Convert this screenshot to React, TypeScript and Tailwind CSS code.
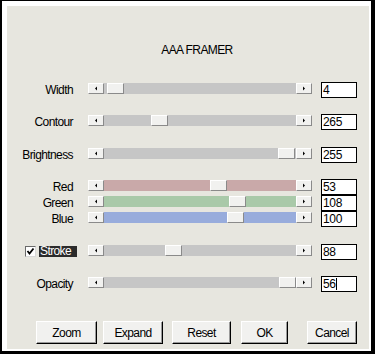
import React from 'react';

const sliders = [
  { label: 'Width', value: '4', thumb: 19, track: 'bg-[#c6c6c6]', gap: 'mt-[25px]' },
  { label: 'Contour', value: '265', thumb: 63, track: 'bg-[#c6c6c6]', gap: 'mt-[16px]' },
  { label: 'Brightness', value: '255', thumb: 190, track: 'bg-[#c6c6c6]', gap: 'mt-[17px]' },
  { label: 'Red', value: '53', thumb: 122, track: 'bg-[#c9a9a9]', gap: 'mt-[16px]' },
  { label: 'Green', value: '108', thumb: 141, track: 'bg-[#a9c9a9]', gap: 'mt-0' },
  { label: 'Blue', value: '100', thumb: 139, track: 'bg-[#98acdc]', gap: 'mt-0' },
];

const ArrowBtn = ({ dir }: { dir: 'left' | 'right' }) => (
  <div className="w-[16px] h-[11px] shrink-0 bg-[#f1f1ef] border-t border-l border-t-white border-l-white border-r border-b border-r-[#8a8a8a] border-b-[#8a8a8a] flex items-center justify-center">
    <svg width="4" height="5" viewBox="0 0 4 5">
      {dir === 'left' ? <polygon points="1,2.5 3,0.5 3,4.5" fill="#000" /> : <polygon points="3,2.5 1,0.5 1,4.5" fill="#000" />}
    </svg>
  </div>
);

const Slider = ({ thumb, track }: { thumb: number; track: string }) => (
  <div className="relative flex w-[224px] mt-[1px]">
    <ArrowBtn dir="left" />
    <div className={`flex-1 h-[11px] ${track}`} />
    <ArrowBtn dir="right" />
    <div
      className="absolute top-0 w-[17px] h-[11px] bg-[#f1f1ef] border-t border-l border-t-white border-l-white border-r border-b border-r-[#8a8a8a] border-b-[#8a8a8a]"
      style={{ left: thumb }}
    />
  </div>
);

const ValueBox = ({ value, caret }: { value: string; caret?: boolean }) => (
  <div className="ml-[9px] w-[36px] h-[16px] bg-white border border-black flex items-center pl-[1px] text-[12px] leading-[14px] tracking-[-0.3px]">
    {value}
    {caret && <span className="inline-block w-[1px] h-[12px] bg-black" />}
  </div>
);

const Button = ({ label, className }: { label: string; className: string }) => (
  <button
    className={`h-[23px] bg-[#f1f1ef] border border-t-white border-l-white border-r-black border-b-black shadow-[inset_-1px_-1px_0_#9a9a9a] text-[12px] tracking-[-0.6px] text-black ${className}`}
  >
    {label}
  </button>
);

export default function App() {
  return (
    <div className="w-[375px] h-[354px] bg-black pl-[2px] pt-[1px] pr-[4px] pb-[3px] flex font-['Liberation_Sans',Arial,sans-serif] text-black">
      <div className="flex-1 flex bg-white pl-[5px] pt-[5px] pr-[2px] pb-[2px]">
        <div className="flex-1 flex flex-col bg-[#e7e6df]">
          <div className="mt-[37px] pl-[18px] text-center text-[12px] leading-[14px] tracking-[-0.6px]">AAA FRAMER</div>

          {sliders.map((s) => (
            <div key={s.label} className={`flex items-start h-[16px] ${s.gap}`}>
              <div className="w-[81px] pr-[15px] text-right text-[12px] leading-[16px] tracking-[-0.6px]">{s.label}</div>
              <Slider thumb={s.thumb} track={s.track} />
              <ValueBox value={s.value} />
            </div>
          ))}

          <div className="flex items-start h-[16px] mt-[17px]">
            <div className="w-[81px] pl-[18px] flex items-start">
              <div className="mt-[2px] w-[11px] h-[11px] bg-white border-t border-l border-t-[#6a6a6a] border-l-[#6a6a6a] border-r border-b border-r-[#d8d8d8] border-b-[#d8d8d8] flex items-center justify-center">
                <svg width="9" height="9" viewBox="0 0 9 9">
                  <path d="M1.5 4 L3.5 6.5 L7.5 1.5" stroke="#000" strokeWidth="1.8" fill="none" />
                </svg>
              </div>
              <div className="ml-[3px] mt-[2px] w-[38px] h-[11px] bg-[#2b2b2b] text-white text-[12px] leading-[11px] tracking-[-0.6px] pl-[1px]">Stroke</div>
            </div>
            <Slider thumb={77} track="bg-[#c6c6c6]" />
            <ValueBox value="88" />
          </div>

          <div className="flex items-start h-[16px] mt-[16px]">
            <div className="w-[81px] pr-[15px] text-right text-[12px] leading-[16px] tracking-[-0.6px]">Opacity</div>
            <Slider thumb={191} track="bg-[#c6c6c6]" />
            <ValueBox value="56" caret />
          </div>

          <div className="flex mt-[29px] pl-[29px]">
            <Button label="Zoom" className="w-[61px]" />
            <Button label="Expand" className="ml-[6px] w-[60px]" />
            <Button label="Reset" className="ml-[9px] w-[59px]" />
            <Button label="OK" className="ml-[10px] w-[47px]" />
            <Button label="Cancel" className="ml-[19px] w-[50px]" />
          </div>
        </div>
      </div>
    </div>
  );
}
